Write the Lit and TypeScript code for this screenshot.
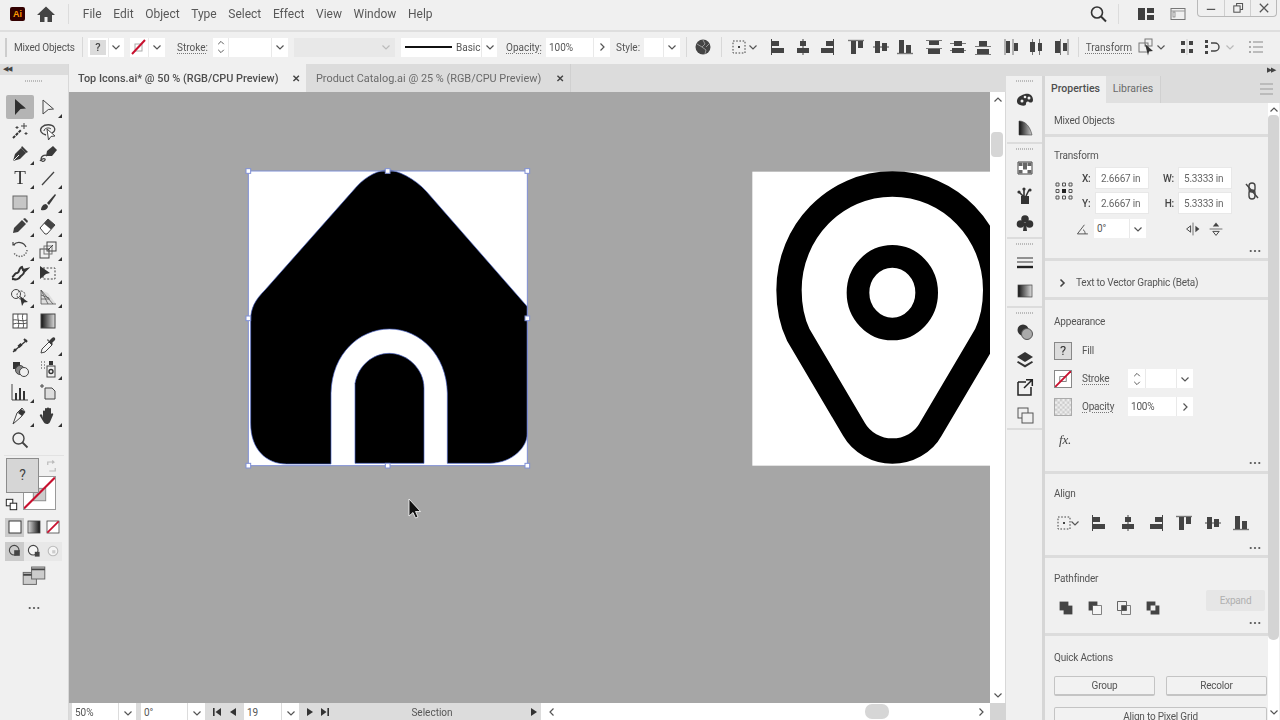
import { LitElement, html, css, svg } from "lit";
import { customElement } from "lit/decorators.js";

const ic = (c: unknown) => html`<svg class="ic" viewBox="0 0 20 20">${c}</svg>`;
const chev = html`<svg class="chev" viewBox="0 0 10 10"><path d="M1.5 3.5L5 7l3.5-3.5" /></svg>`;
const chevR = html`<svg class="chev" viewBox="0 0 10 10"><path d="M3.5 1.5L7 5 3.5 8.5" /></svg>`;
const chevUp = html`<svg class="chev" viewBox="0 0 10 10"><path d="M1.5 6.5L5 3l3.5 3.5" /></svg>`;
const dots = html`<svg class="dots" viewBox="0 0 14 4"><circle cx="2" cy="2" r="1.3" /><circle cx="7" cy="2" r="1.3" /><circle cx="12" cy="2" r="1.3" /></svg>`;

const D = "#444";
const al = {
  left: svg`<path d="M3.5 2v16" stroke="${D}"/><path d="M4 4h7v5H4zM4 11h12v5H4z" fill="${D}"/>`,
  hc: svg`<path d="M10 2v16" stroke="${D}"/><path d="M7 4h6v5H7zM4 11h12v5H4z" fill="${D}"/>`,
  right: svg`<path d="M16.5 2v16" stroke="${D}"/><path d="M9 4h7v5H9zM4 11h12v5H4z" fill="${D}"/>`,
  top: svg`<path d="M2 3.5h16" stroke="#777" stroke-width="1.4"/><path d="M5 4h5v13H5zM12 4h5v7h-5z" fill="${D}"/>`,
  vc: svg`<path d="M2 10h16" stroke="${D}"/><path d="M4 4h5v12H4zM11 6h5v8h-5z" fill="${D}"/>`,
  bottom: svg`<path d="M2 16.5h16" stroke="#777" stroke-width="1.4"/><path d="M4 3h5v13H4zM11 8h5v8h-5z" fill="${D}"/>`,
  dt: svg`<path d="M2 3.5h16M2 11.5h16" stroke="#777"/><path d="M5 4h10v4H5zM4 12h12v5H4z" fill="${D}"/>`,
  dc: svg`<path d="M2 6.5h16M2 13.5h16" stroke="#777"/><path d="M6 4h8v5H6zM4 11h12v5H4z" fill="${D}"/>`,
  db: svg`<path d="M2 9.5h16M2 17.5h16" stroke="#777"/><path d="M6 4h8v5H6zM4 12h12v5H4z" fill="${D}"/>`,
  dl: svg`<path d="M3 2v16M11 2v16" stroke="#777"/><path d="M4 4h4v12H4zM12 6h4v8h-4z" fill="${D}"/>`,
  dm: svg`<path d="M6.5 2v16M13.5 2v16" stroke="#777"/><path d="M4 5h5v10H4zM12 6h4v8h-4z" fill="${D}"/>`,
  dr: svg`<path d="M9.5 2v16M17 2v16" stroke="#777"/><path d="M4 4h5v12H4zM12 6h4v8h-4z" fill="${D}"/>`,
};
const alignTo = svg`<rect x="3" y="4" width="12" height="12" fill="none" stroke="#444" stroke-dasharray="1.6 1.6"/><rect x="8" y="9" width="2" height="2" fill="#444"/>`;

const grad = svg`<defs><linearGradient id="g1" x1="0" x2="1"><stop offset="0" stop-color="#111"/><stop offset="1" stop-color="#ddd"/></linearGradient></defs>`;

const tools: { i: unknown; f?: boolean; on?: boolean; t?: boolean }[] = [
  { on: true, i: svg`<path d="M5 2l11 9.5-5.5.6L5 18z" fill="#2f2f2f"/>` },
  { f: true, i: svg`<path d="M5 3l10.5 9-5.2.5L5 17z" fill="none" stroke="#444"/>` },
  { i: svg`<path d="M3 17l8-8" stroke="#333" stroke-width="2" stroke-dasharray="3 1"/><path d="M14 2v6M11 5h6M7 5v3M5.5 6.5h3M16 11v3M14.5 12.5h3" stroke="#444"/>` },
  { i: svg`<path d="M8 14C3 13 1 9 4 6s10-3 12 0 0 5-2 6" fill="none" stroke="#444" stroke-width="1.3"/><path d="M6 10c0-3 5-4 7-2" fill="none" stroke="#444"/><path d="M9 8l8 7-4 .4-2.5 3.6z" fill="#fff" stroke="#444"/>` },
  { f: true, i: svg`<path d="M3 17l2-7 6-6 5 5-6 6z" fill="#3a3a3a"/><path d="M12 2l6 6-2 1-5-5z" fill="#3a3a3a"/><path d="M3.5 16.5L9 11" stroke="#f0f0f0"/>` },
  { i: svg`<path d="M8 12l1-5 6-5 4 4-5 6z" fill="#3a3a3a"/><path d="M9 12c-2-2-6 0-6 3s3 3 4 1-3-2-5 1" fill="none" stroke="#444" stroke-width="1.3"/>` },
  { f: true, t: true, i: html`<span class="tee">T</span>` },
  { f: true, i: svg`<path d="M4 17L16 4" stroke="#444" stroke-width="1.3"/>` },
  { f: true, i: svg`<rect x="3" y="4" width="14" height="13" fill="#c6c6c6" stroke="#666"/>` },
  { f: true, i: svg`<path d="M17 2l1 1-7 10-2-2z" fill="#3a3a3a"/><path d="M3 18c0-3 2-6 5-6l2 2c0 3-3 5-7 4z" fill="#3a3a3a"/>` },
  { f: true, i: svg`<path d="M3 17l1-5 8-8 4 4-8 8z" fill="#3f3f3f"/><path d="M13 3l2-1 3 3-1 2z" fill="#3f3f3f"/>` },
  { f: true, i: svg`<path d="M2 12l8-9 7 6-8 9H7z" fill="#fff" stroke="#444"/><path d="M6 7.5L10 3l7 6-4 4.5z" fill="#444"/>` },
  { f: true, i: svg`<path d="M5 5h-2V2M3.5 5A7.5 7.5 0 0 1 16 7" fill="none" stroke="#444" stroke-width="1.2"/><path d="M17 10a7 7 0 0 1-13 3" fill="none" stroke="#666" stroke-width="1.5" stroke-dasharray="1.3 1.3"/>` },
  { f: true, i: svg`<rect x="2" y="9" width="9" height="9" fill="none" stroke="#444"/><rect x="6" y="6" width="8" height="8" fill="none" stroke="#777"/><rect x="9" y="2" width="9" height="9" fill="none" stroke="#444"/><path d="M10 10l5-5" stroke="#444"/>` },
  { f: true, i: svg`<path d="M2 14c3-1 2-4 5-4s1-5 5-6l1 3 4-1-3 3c0 3-3 3-4 5s-4 3-6 2" fill="none" stroke="#333" stroke-width="2"/><circle cx="3" cy="16" r="1.2" fill="#333"/>` },
  { f: true, i: svg`<rect x="5" y="5" width="12" height="11" fill="none" stroke="#444" stroke-dasharray="2 1.6"/><path d="M2 3l10 7-4 1-6 5z" fill="#333"/>` },
  { f: true, i: svg`<circle cx="6" cy="7" r="4.5" fill="none" stroke="#444"/><circle cx="11" cy="8" r="4" fill="none" stroke="#444" stroke-dasharray="2 1"/><path d="M10 9l8 6-4 .4-2 3.6z" fill="#333"/>` },
  { f: true, i: svg`<path d="M3 17V3l7 3 8 11z" fill="#ddd" stroke="none"/><path d="M3 3v14h15M3 3l7 14M3 3l12 14M3 8l8 3M3 12h9" stroke="#555" fill="none" stroke-width=".8"/>` },
  { i: svg`<rect x="3" y="3" width="14" height="14" fill="#fff" stroke="#444"/><path d="M3 9c4-1 8 2 14 0M3 13c5-2 9 1 14-1M8 3c-1 5 2 9 0 14M13 3c-2 5 2 9 0 14" fill="none" stroke="#444" stroke-width=".9"/>` },
  { i: svg`${grad}<rect x="3" y="3" width="14" height="14" fill="url(#g1)" stroke="#444"/>` },
  { i: svg`<path d="M3 17l14-12" stroke="#333" stroke-width="1.2"/><circle cx="5" cy="15" r="1.5" fill="#333"/><rect x="8" y="9" width="4" height="3" fill="#333" transform="rotate(-40 10 10.5)"/><path d="M14 4l3 3" stroke="#333" stroke-width="2"/>` },
  { f: true, i: svg`<path d="M3 18l1-4 7-7 3 3-7 7z" fill="#f5f5f5" stroke="#444"/><path d="M11 6l3-3c2-2 4 0 3 2l-3 3 1 1-1 1-5-5 1-1z" fill="#3a3a3a"/>` },
  { i: svg`<rect x="3" y="3" width="7" height="7" fill="#333"/><circle cx="10" cy="11" r="4.5" fill="#888" stroke="#444"/><circle cx="14" cy="13" r="4.5" fill="#f0f0f0" stroke="#444"/>` },
  { f: true, i: svg`<rect x="9" y="7" width="8" height="11" fill="#f0f0f0" stroke="#444"/><circle cx="13" cy="12.5" r="2" fill="none" stroke="#333" stroke-width="1.4"/><rect x="11" y="2" width="4" height="4" fill="#333"/><path d="M3 3h1M6 3h1M3 6h1M6 6h1M3 9h1M6 9h1" stroke="#777" stroke-width="1.3"/>` },
  { f: true, i: svg`<path d="M2 2v16h16" fill="none" stroke="#444"/><path d="M5 11h2v7H5zM9 6h2v12H9zM13 9h2v9h-2z" fill="#333"/>` },
  { i: svg`<path d="M7 6h7l3 3v8H7z" fill="#ddd" stroke="#444"/><path d="M2 4h4M4 2v4" stroke="#444"/>` },
  { f: true, i: svg`<path d="M3 18l4-11 5-5 3 4-4 5z" fill="#f5f5f5" stroke="#444"/><path d="M11 3l4 3-3 4-4-3z" fill="#333"/>` },
  { f: true, i: svg`<path d="M5 12V5.5c0-1.3 2-1.3 2 0V3c0-1.3 2-1.3 2 0v-.5c0-1.3 2-1.3 2 0V3c0-1.3 2-1.3 2 0v5c.8-1.5 3-.5 2 1l-3 7c-.7 1.5-2 2-3 2H9c-2 0-3-1-4-3l-3-5c-.8-1.4 1.3-2.5 2.2-1z" fill="#3a3a3a"/>` },
  { i: svg`<circle cx="8.5" cy="8.5" r="5.5" fill="none" stroke="#444" stroke-width="1.4"/><path d="M12.5 12.5l5 5" stroke="#444" stroke-width="1.8"/>` },
];

const dockGroups: unknown[][] = [
  [
    svg`<path d="M10 4c5-1 8 2 8 6 0 3-3 3-4 2-2-1-3 0-3 2s-3 2-6 1-4-4-2-7c1-2 4-3 7-4z" fill="#333"/><circle cx="7" cy="11" r="1.5" fill="#f0f0f0"/><circle cx="14" cy="8" r="1.5" fill="#f0f0f0"/><circle cx="10" cy="7" r="1.3" fill="#f0f0f0"/>`,
    svg`<defs><linearGradient id="g2" x1="0" x2="1" y1="0" y2="0"><stop offset="0" stop-color="#111"/><stop offset="1" stop-color="#ccc"/></linearGradient></defs><path d="M4 3c6 0 11 5 13 14H4z" fill="url(#g2)" stroke="#444" stroke-width=".6"/>`,
  ],
  [
    svg`<path d="M3 4h14v12H3z" fill="#fff" stroke="#444"/><path d="M3.5 4.5h4v3.5h-4zM12.5 4.5h4v3.5h-4zM8 8h4v3.5H8zM3.5 12h4v3.5h-4zM12.5 12h4v3.5h-4zM8 4.5h4V8H8z" fill="#666"/>`,
    svg`<path d="M6 10h8v8H6z" fill="#333"/><path d="M9 10V4M11 10l3-6M8 10L4 6" stroke="#333" stroke-width="1.6"/><circle cx="9" cy="3" r="1.6" fill="#333"/><circle cx="15" cy="4" r="1.6" fill="#333"/><circle cx="4" cy="6" r="1.6" fill="#333"/>`,
    svg`<circle cx="10" cy="6" r="3.8" fill="#333"/><circle cx="5.5" cy="11" r="3.8" fill="#333"/><circle cx="14.5" cy="11" r="3.8" fill="#333"/><path d="M9 10h2l1 8H8z" fill="#333"/>`,
  ],
  [
    svg`<path d="M2 5h16M2 9h16" stroke="#333"/><path d="M2 14h16" stroke="#222" stroke-width="2.4"/>`,
    svg`<defs><linearGradient id="g3" x1="0" x2="1"><stop offset="0" stop-color="#111"/><stop offset="1" stop-color="#ddd"/></linearGradient></defs><rect x="3" y="4" width="14" height="12" fill="url(#g3)" stroke="#444" stroke-width=".7"/>`,
  ],
  [
    svg`<circle cx="8" cy="8" r="5.5" fill="#333"/><circle cx="12" cy="12" r="5.5" fill="#aaa" stroke="#555"/>`,
    svg`<path d="M10 2l8 5-8 5-8-5z" fill="#333"/><path d="M3 11l7 4 7-4 1 1.4-8 5-8-5z" fill="#333"/>`,
    svg`<path d="M3 5h8M3 5v13h13v-8" fill="none" stroke="#222" stroke-width="1.5"/><path d="M9 11l8-8M11 2.7h6.3V9" fill="none" stroke="#222" stroke-width="1.5"/>`,
    svg`<rect x="3" y="3" width="10" height="10" fill="#f0f0f0" stroke="#555"/><rect x="7" y="8" width="11" height="10" fill="#f0f0f0" stroke="#555"/>`,
  ],
];

@customElement("app-root")
export class AppRoot extends LitElement {
  static styles = css`
    :host { display: block; width: 1280px; height: 720px; overflow: hidden; background: #f0f0f0; font-family: Roboto, "Noto Sans", sans-serif; font-size: 10px; color: #565656; }
    * { box-sizing: border-box; }
    .ic { width: 20px; height: 20px; display: block; flex: none; }
    .chev { width: 10px; height: 10px; display: block; flex: none; }
    .chev path { fill: none; stroke: #555; stroke-width: 1.2; }
    .dots { width: 12px; height: 4px; display: block; fill: #555; }
    .app { display: flex; flex-direction: column; height: 720px; filter: blur(.3px); }

    /* menu */
    .menu { height: 30px; display: flex; align-items: center; flex: none; padding-bottom: 2px; }
    .logo { width: 15px; height: 14px; margin-left: 10px; background: #330000; border-radius: 2px; color: #ff9a00; font: 700 9px "Liberation Sans", sans-serif; display: flex; align-items: center; justify-content: center; }
    .home { margin-left: 11px; }
    .msep { width: 1px; height: 20px; background: #dcdcdc; margin: 0 8px 0 12px; }
    .mitems { display: flex; font-size: 12px; color: #585858; }
    .mitems span { padding: 0 5.8px; white-space: nowrap; }
    .mright { margin-left: auto; display: flex; align-items: center; height: 30px; }
    .msearch { margin-right: 10px; }
    .msep2 { width: 1px; height: 20px; background: #dcdcdc; margin-right: 17px; }
    .ws { margin-right: 12px; }
    .ws2 { margin-right: 8px; }
    .winbtns { display: flex; align-self: flex-start; margin-right: 3px; margin-left: 1px; height: 18px; border: 1px solid #b9b9b9; border-top: 0; border-radius: 0 0 4px 4px; }
    .winbtns div { width: 26px; display: flex; align-items: center; justify-content: center; border-left: 1px solid #cfcfcf; }
    .winbtns div:first-child { border-left: 0; }
    .winbtns .ic { width: 14px; height: 14px; }

    /* control */
    .ctrl { height: 34px; flex: none; border-top: 2px solid #dedede; display: flex; align-items: center; padding-bottom: 2px; }
    .grip { width: 2px; height: 19px; background: #cdcdcd; margin-left: 5px; }
    .cmix { margin-left: 7px; width: 68px; white-space: nowrap; letter-spacing: -.2px; }
    .vsep { width: 1px; height: 20px; background: #d8d8d8; flex: none; }
    .fld { display: flex; height: 19px; gap: 1px; background: #e9e9e9; flex: none; align-items: stretch; }
    .fld > * { background: #fff; display: flex; align-items: center; justify-content: center; }
    .qfield { margin-left: 5px; width: 36px; }
    .qfield b { width: 20px; justify-content: center; background: #dcdcdc; font-weight: 500; border: 2px solid #fff; font-size: 11px; color: #444; }
    .qfield > span { flex: 1; padding-right: 2px; }
    .sfield { margin-left: 6px; width: 35px; }
    .sfield > i { width: 18px; }
    .sfield > span { flex: 1; }
    .dl { text-decoration: underline dotted #777; text-underline-offset: 2px; white-space: nowrap; }
    .cstroke { margin-left: 12px; width: 36px; }
    .cstroke span, .cop span, .ctrans span { display: inline-block; }
    .stepper { flex-direction: column; gap: 0; }
    .stepper .chev { height: 8px; width: 10px; }
    .cs-w { width: 75px; }
    .cs-w > .stepper { width: 15px; }
    .cs-w > u { flex: 1; }
    .cs-w > i { width: 16px; }
    .dis { margin-left: 6px; width: 101px; background: #e8e8e8; justify-content: flex-end; padding-right: 4px; display: flex; height: 19px; align-items: center; flex: none; }
    .dis .chev { opacity: .3; }
    .prof { margin-left: 6px; width: 96px; }
    .prof > div { flex: 1; justify-content: flex-start; padding-left: 4px; gap: 4px; }
    .prof > div u { display: block; width: 47px; height: 2px; background: #111; }
    .prof > i { width: 15px; }
    .cop { margin-left: 9px; width: 40px; }
    .op { width: 64px; }
    .op > span { flex: 1; justify-content: flex-start; padding-left: 3px; }
    .op > i { width: 16px; }
    .cstyle { margin-left: 6px; width: 28px; }
    .stf { width: 36px; }
    .stf > u { flex: 1; }
    .stf > i { width: 16px; }
    .cv1 { margin-left: 6px; }
    .globe { margin: 0 8px 0 6px; }
    .alto { margin-left: 8px; display: flex; align-items: center; width: 36px; }
    .alto .chev { margin-left: -2px; }
    .algrp { display: flex; }
    .algrp span { width: 24.5px; display: flex; justify-content: center; }
    .algs { display: flex; gap: 4.25px; }
    .cv2 { margin-left: 5px; }
    .ctrans { margin: 0 9px 0 7px; width: 41px; }
    .cend2 { margin-left: 11px; }
    .cend3 { margin-left: 5px; }
    .cend5 { margin-left: 3px; opacity: .35; }
    .cend6 { margin-left: 11px; }

    /* main */
    .main { flex: 1; display: flex; min-height: 0; }
    .strip { height: 11px; background: #dcdcdc; display: flex; align-items: center; padding: 0 3px; flex: none; font-size: 7px; line-height: 1; color: #444; }
    .left { width: 69px; flex: none; display: flex; flex-direction: column; border-right: 1px solid #d8d8d8; }
    .griph { height: 2px; width: 18px; margin: 5px auto 0; background: repeating-linear-gradient(90deg, #bbb 0 1px, transparent 1px 2px); flex: none; }
    .tools { display: grid; grid-template-columns: 28px 28px; grid-auto-rows: 23.8px; margin: 13px 0 0 6px; width: 56px; flex: none; }
    .tool { position: relative; display: flex; align-items: center; justify-content: center; }
    .tool.on { background: #b4b4b4; border-radius: 2px; }
    .tool.fly::after { content: ""; position: absolute; right: 0; bottom: 1px; border: 2px solid transparent; border-right-color: #333; border-bottom-color: #333; }
    .tee { font: 400 19px "Liberation Serif", serif; color: #333; line-height: 20px; }
    .hsep { height: 1px; background: #e2e2e2; margin: 3px 4px 0; flex: none; }
    .fs { position: relative; height: 58px; margin: 2px 0 0 0; flex: none; }
    .fs .fill { position: absolute; left: 6px; top: 0; width: 33px; height: 35px; background: #d6d6d6; border: 1px solid #8c8c8c; z-index: 2; display: flex; align-items: center; justify-content: center; font-size: 14px; color: #444; }
    .fs .stroke { position: absolute; left: 23px; top: 18px; width: 33px; height: 34px; background: #fff; border: 1px solid #999; }
    .fs .stroke .ic { width: 31px; height: 32px; }
    .fs .swap { position: absolute; left: 44px; top: 1px; }
    .fs .swap .ic { width: 15px; height: 15px; }
    .fs .def { position: absolute; left: 5px; top: 40px; }
    .fs .def .ic { width: 13px; height: 13px; }
    .row3 { display: flex; margin: 2px 0 0 5px; width: 57px; height: 19px; flex: none; }
    .row3 div { flex: 1; display: flex; align-items: center; justify-content: center; }
    .row3 .ic { width: 16px; height: 16px; }
    .row3 .on { background: #cbcbcb; }
    .row3b { margin-top: 5px; background: #e8e8e8; }
    .scr { display: flex; justify-content: center; margin-top: 3px; flex: none; }
    .scr .ic { width: 24px; height: 24px; }
    .ldots { display: flex; justify-content: center; margin-top: 18px; flex: none; }

    .center { width: 937px; flex: none; display: flex; flex-direction: column; }
    .tabs { height: 28px; flex: none; background: #dcdcdc; display: flex; font-size: 10.9px; font-weight: 500; color: #4e4e4e; }
    .tab { display: flex; align-items: center; white-space: nowrap; }
    .tab.a { width: 237px; background: #f0f0f0; padding: 0 6px 0 9px; justify-content: space-between; }
    .tab.b { width: 265px; padding: 0 6px 0 10px; justify-content: space-between; font-weight: 400; color: #6a6a6a; border-right: 1px solid #d0d0d0; }
    .x { font-size: 10px; font-weight: 700; color: #444; }
    .work { flex: 1; display: flex; min-height: 0; }
    .canvas { width: 921px; position: relative; overflow: hidden; background: #a6a6a6; }
    .art { position: absolute; left: 161px; top: 68px; width: 310px; height: 320px; }
    .art2 { position: absolute; left: 671px; top: 68px; width: 270px; height: 320px; }
    .cursor { position: absolute; left: 339px; top: 406px; width: 16px; height: 22px; }
    .vs { width: 16px; flex: none; background: #fff; position: relative; border-right: 1px solid #d8d8d8; display: flex; flex-direction: column; align-items: center; justify-content: space-between; padding: 3px 0; }
    .thumb { position: absolute; left: 1px; top: 40px; width: 12px; height: 25px; background: #d6d6d6; border-radius: 4px; }
    .status { height: 17px; flex: none; background: #dcdcdc; display: flex; align-items: stretch; }
    .st { display: flex; gap: 1px; flex: none; margin-left: 3px; }
    .st > * { background: #fff; display: flex; align-items: center; padding-top: 2px; }
    .st > span { padding-left: 3px; }
    .st > i { justify-content: center; }
    .w46 > span { width: 46px; }
    .w46 > i { width: 17px; }
    .w37 > span { width: 37px; }
    .w37 > i { width: 17px; }
    .s2nd { margin-left: 5px; }
    .sn { display: flex; align-items: center; margin: 0 3px 0 7px; gap: 6px; padding-top: 1px; }
    .sn2 { margin: 0; margin-left: 6px; gap: 5px; }
    .tri { display: block; width: 10px; height: 10px; flex: none; fill: #333; align-self: center; }
    .sel { width: 199px; padding: 2px 0 0 5px; display: flex; align-items: center; justify-content: center; }
    .hs { flex: 1; background: #fff; margin-left: 2px; position: relative; display: flex; align-items: center; justify-content: space-between; padding: 1px 4px 0 6px; }
    .hthumb { position: absolute; left: 324px; top: 1px; width: 24px; height: 15px; background: #d6d6d6; border-radius: 7px; }
    .corner { width: 16px; background: #d4d4d4; flex: none; }

    .dock { width: 39px; flex: none; border-right: 3px solid #d6d6d6; display: flex; flex-direction: column; background: #f0f0f0; padding-left: 1px; }
    .dhead { height: 12px; background: #dcdcdc; margin-left: -1px; flex: none; margin-right: -3px; }
    .dgrp { display: flex; flex-direction: column; align-items: center; flex: none; border-bottom: 2px solid #dcdcdc; padding-top: 14px; gap: 7.5px; position: relative; }
    .dgrp::before { content: ""; position: absolute; left: 9px; top: 4px; width: 18px; height: 2px; background: repeating-linear-gradient(90deg, #bbb 0 1px, transparent 1px 2px); }
    .dg0 { height: 68px; } .dg1 { height: 95px; } .dg2 { height: 69px; } .dg3 { height: 122px; }

    .panel { flex: 1; display: flex; flex-direction: column; min-width: 0; }
    .phead { height: 12px; background: #dcdcdc; display: flex; justify-content: flex-end; align-items: center; padding-right: 5px; flex: none; font-size: 7px; color: #444; }
    .ptabs { height: 27px; background: #dcdcdc; display: flex; flex: none; align-items: stretch; font-size: 10.5px; position: relative; }
    .ptabs > div { display: flex; align-items: center; justify-content: center; padding-bottom: 3px; }
    .pa { width: 61px; background: #f0f0f0; font-weight: 500; color: #4e4e4e; }
    .pb { width: 55px; background: #e0e0e0; font-weight: 400; color: #6a6a6a; border-right: 1px solid #d0d0d0; }
    .pmenu { position: absolute; right: 3px; top: 3px; }
    .pbody { flex: 1; display: flex; min-height: 0; }
    .secs { width: 223px; flex: none; overflow: hidden; letter-spacing: -.2px; }
    .sb { width: 11px; background: #fff; position: relative; flex: none; display: flex; flex-direction: column; align-items: center; justify-content: space-between; padding: 2px 0 3px; }
    .sbt { position: absolute; left: 0; top: 12px; width: 11px; height: 525px; background: #d4d4d4; border-radius: 4px 4px 5px 5px; }
    .sec { padding: 11px 9px 0; border-bottom: 3px solid #dcdcdc; overflow: hidden; position: relative; }
    .sec h4 { margin: 0; font-size: 10px; font-weight: 400; color: #555; line-height: 14px; white-space: nowrap; }
    .s1 { height: 34px; padding-top: 11px; } .s2 { height: 124px; padding-top: 12px; } .s3 { height: 39px; padding-top: 15px; } .s4 { height: 174px; padding-top: 15px; } .s5 { height: 84px; padding-top: 13px; } .s6 { height: 78px; padding-top: 14px; } .s7 { height: 100px; border-bottom: 0; padding-top: 15px; }
    .secdots { position: absolute; right: 7px; bottom: 4px; }
    .s2 .secdots { bottom: 5px; } .s4 .secdots { bottom: 6px; } .s5 .secdots { bottom: 5px; } .s6 .secdots { bottom: 8px; }
    .tgrid { display: grid; grid-template-columns: 28px 14px 52px 31px 52px 36px; grid-template-rows: 20px 20px; row-gap: 5px; margin-top: 5px; align-items: center; }
    .tgrid .refpt { grid-row: 1 / 3; }
    .tgrid .lnk { grid-row: 1 / 3; grid-column: 6; justify-self: end; margin-right: 5px; }
    .lb { font-weight: 500; font-size: 10px; color: #444; }
    .lbr { text-align: right; padding-right: 5px; }
    .inp { background: #fff; height: 20px; display: flex; align-items: center; padding-left: 5px; box-shadow: 0 0 0 1px #e8e8e8; white-space: nowrap; color: #666; }
    .trow { display: flex; align-items: center; margin-top: 6px; height: 19px; }
    .ang { margin-left: 22px; }
    .ang .ic { width: 14px; height: 14px; margin-right: 4px; }
    .afld { width: 52px; }
    .afld > span { flex: 1; justify-content: flex-start; padding-left: 3px; }
    .afld > i { width: 16px; }
    .flips { display: flex; margin-left: 39px; gap: 7px; }
    .flips .ic { width: 16px; height: 16px; }
    .ttv { display: flex; align-items: center; gap: 9px; padding: 1px 0 0 3px; white-space: nowrap; }
    .ttv .chev path { stroke-width: 1.6; stroke: #444; }
    .apr { display: flex; align-items: center; height: 19px; margin-top: 9px; }
    .apr1 { margin-top: 12px; }
    .sw { width: 18px; height: 18px; margin-right: 10px; flex: none; }
    .swq { background: #dcdcdc; border: 1px solid #888; font-size: 13px; display: flex; align-items: center; justify-content: center; color: #333; }
    .swn { border: 1px solid #888; background: #fff; }
    .swn .ic, .swo .ic { width: 16px; height: 16px; }
    .swo { border: 1px solid #aaa; }
    .apl { width: 46px; white-space: nowrap; }
    .apf { width: 65px; }
    .apf > .stepper { width: 17px; }
    .apf > u { flex: 1; }
    .apf > i { width: 16px; }
    .apo { width: 65px; }
    .apo > span { flex: 1; justify-content: flex-start; padding-left: 3px; }
    .apo > i { width: 16px; }
    .fx { font: italic 13px "Liberation Serif", serif; margin: 16px 0 0 5px; color: #444; }
    .alrow { display: flex; align-items: center; margin-top: 12px; }
    .alrow .a0 { display: flex; align-items: center; margin-left: 1px; width: 30px; }
    .alrow .a0 .chev { margin-left: -5px; }
    .alrow .ai { width: 28.4px; display: flex; justify-content: center; flex: none; }
    .pfrow { display: flex; margin-top: 14px; align-items: center; position: relative; }
    .pfrow span { width: 29px; display: flex; justify-content: center; }
    .pfrow span .ic { width: 16px; height: 16px; }
    .pfbtns { display: flex; margin-left: -3px; }
    .exp { position: absolute; left: 152px; top: -10px; width: 59px; height: 21px; background: #e6e6e6; color: #b0b0b0; display: flex; align-items: center; justify-content: center; border-radius: 2px; }
    .qa { display: grid; grid-template-columns: 101px 101px; column-gap: 11px; row-gap: 11px; margin-top: 11px; }
    .qa div { height: 20px; border: 1px solid #c4c4c4; border-bottom-width: 2px; border-radius: 2px; display: flex; align-items: center; justify-content: center; white-space: nowrap; color: #555; background: #f2f2f2; }
    .qa .wide { grid-column: 1 / 3; }
    .art svg, .art2 svg { display: block; width: 100%; height: 100%; }
    .tchev { font-size: 7px; letter-spacing: -1px; }
  `;

  render() {
    const stepper = html`<span class="stepper">${chevUp}${chev}</span>`;
    return html`
      <div class="app">
        <div class="menu">
          <div class="logo">Ai</div>
          <div class="home">${ic(svg`<path d="M10 2.5L1 11h3v7h4.5v-5h3v5H16v-7h3z" fill="#444"/>`)}</div>
          <div class="msep"></div>
          <div class="mitems">
            ${["File", "Edit", "Object", "Type", "Select", "Effect", "View", "Window", "Help"].map((m) => html`<span>${m}</span>`)}
          </div>
          <div class="mright">
            <div class="msearch">${ic(svg`<circle cx="9" cy="8.5" r="5.5" fill="none" stroke="#333" stroke-width="1.6"/><path d="M13 12.5l5 5" stroke="#333" stroke-width="2"/>`)}</div>
            <div class="msep2"></div>
            <div class="ws">${ic(svg`<path d="M2 4h7v12H2zM11 4h7v5h-7zM11 11h7v5h-7z" fill="#3f3f3f"/>`)}</div>
            <div class="ws2">${ic(svg`<rect x="3" y="4.5" width="14" height="11" fill="none" stroke="#777"/><path d="M3 7h14" stroke="#999"/><rect x="5" y="8" width="2" height="5" fill="none" stroke="#777" stroke-width=".7"/>`)}</div>
            <div class="winbtns">
              <div>${ic(svg`<path d="M4 12h12" stroke="#555" stroke-width="1.8"/>`)}</div>
              <div>${ic(svg`<rect x="4" y="7" width="9" height="9" fill="none" stroke="#555" stroke-width="1.5"/><path d="M8 7V3.5h8.5V12H13" fill="none" stroke="#555" stroke-width="1.5"/>`)}</div>
              <div>${ic(svg`<path d="M4 4l12 12M16 4L4 16" stroke="#555" stroke-width="1.8"/>`)}</div>
            </div>
          </div>
        </div>

        <div class="ctrl">
          <div class="grip"></div>
          <div class="cmix">Mixed Objects</div>
          <div class="vsep"></div>
          <div class="fld qfield"><b>?</b><span>${chev}</span></div>
          <div class="fld sfield"><i>${ic(svg`<rect x="6" y="7" width="7" height="7" fill="none" stroke="#aaa"/><path d="M3 17L16 3" stroke="#c8102e" stroke-width="2"/>`)}</i><span>${chev}</span></div>
          <div class="cstroke"><span class="dl">Stroke:</span></div>
          <div class="fld cs-w">${stepper}<u></u><i>${chev}</i></div>
          <div class="dis">${chev}</div>
          <div class="fld prof"><div><u></u><span>Basic</span></div><i>${chev}</i></div>
          <div class="cop"><span class="dl">Opacity:</span></div>
          <div class="fld op"><span>100%</span><i>${chevR}</i></div>
          <div class="cstyle">Style:</div>
          <div class="fld stf"><u></u><i>${chev}</i></div>
          <div class="vsep cv1"></div>
          <div class="globe">${ic(svg`<circle cx="10" cy="10" r="7.5" fill="#444"/><path d="M10 3l2 4-3 3 4 3-1 4M4 7l5 3M16 7l-3 3" stroke="#aaa" stroke-width=".8" fill="none"/>`)}</div>
          <div class="vsep"></div>
          <div class="alto">${ic(alignTo)}${chev}</div>
          <div class="algs">
            <div class="algrp"><span>${ic(al.left)}</span><span>${ic(al.hc)}</span><span>${ic(al.right)}</span></div>
            <div class="algrp"><span>${ic(al.top)}</span><span>${ic(al.vc)}</span><span>${ic(al.bottom)}</span></div>
            <div class="algrp"><span>${ic(al.dt)}</span><span>${ic(al.dc)}</span><span>${ic(al.db)}</span></div>
            <div class="algrp"><span>${ic(al.dl)}</span><span>${ic(al.dm)}</span><span>${ic(al.dr)}</span></div>
          </div>
          <div class="vsep cv2"></div>
          <div class="ctrans"><span class="dl">Transform</span></div>
          ${ic(svg`<rect x="3" y="6" width="9" height="9" fill="none" stroke="#777"/><rect x="9" y="2" width="7" height="7" fill="none" stroke="#777"/><path d="M9 7l8 7-4 .4-1 4z" fill="#333"/>`)}
          ${chev}
          <div class="cend2">${ic(svg`<path d="M4 4h4v4H4zM12 4h4v4h-4zM4 12h4v4H4zM12 12h4v4h-4z" fill="#444"/><path d="M10 2v16" stroke="#ccc"/>`)}</div>
          <div class="cend3">${ic(svg`<path d="M3 3h3v3H3zM3 8h3v3H3zM3 14h3v3H3z" fill="#444"/><path d="M9 6h4a4 4 0 0 1 0 8H9" fill="none" stroke="#444" stroke-width="1.4"/>`)}</div>
          <div class="cend5">${chev}</div>
          <div class="cend6">${ic(svg`<path d="M7 5h10M7 10h10M7 15h10" stroke="#888"/><path d="M3 5h2M3 10h2M3 15h2" stroke="#666"/>`)}</div>
        </div>

        <div class="main">
          <div class="left">
            <div class="strip"><span class="tchev">◀◀</span></div>
            <div class="griph"></div>
            <div class="tools">
              ${tools.map((t) => html`<div class="tool ${t.on ? "on" : ""} ${t.f ? "fly" : ""}">${t.t ? t.i : ic(t.i)}</div>`)}
            </div>
            <div class="hsep"></div>
            <div class="fs">
              <div class="fill">?</div>
              <div class="stroke">${ic(svg`<rect x="6" y="7" width="8" height="8" fill="#ccc" stroke="#888" stroke-width=".6"/><path d="M0 20L20 0" stroke="#c8102e" stroke-width="1.4"/>`)}</div>
              <div class="swap">${ic(svg`<path d="M5 8V4h8l-2-2M13 4l-2 2M15 12v4H7" fill="none" stroke="#bbb" stroke-width="1.6"/>`)}</div>
              <div class="def">${ic(svg`<rect x="2" y="2" width="10" height="10" fill="#fff" stroke="#222" stroke-width="1.5"/><rect x="8" y="8" width="10" height="10" fill="#fff" stroke="#222" stroke-width="1.5"/>`)}</div>
            </div>
            <div class="row3">
              <div class="on">${ic(svg`<rect x="2.5" y="2.5" width="15" height="15" fill="#fff" stroke="#333" stroke-width="1.2"/>`)}</div>
              <div>${ic(svg`<defs><linearGradient id="g4" x1="0" x2="1"><stop offset="0" stop-color="#ddd"/><stop offset="1" stop-color="#111"/></linearGradient></defs><rect x="2.5" y="2.5" width="15" height="15" fill="url(#g4)" stroke="#444"/>`)}</div>
              <div>${ic(svg`<rect x="2.5" y="2.5" width="15" height="15" fill="#fff" stroke="#444"/><path d="M3 17L17 3" stroke="#c8102e" stroke-width="2.2"/>`)}</div>
            </div>
            <div class="row3 row3b">
              <div class="on">${ic(svg`<circle cx="9" cy="9" r="6" fill="none" stroke="#444" stroke-width="1.4"/><rect x="9" y="9" width="7" height="7" fill="#444"/>`)}</div>
              <div>${ic(svg`<circle cx="9" cy="9" r="6" fill="#f5f5f5" stroke="#444" stroke-width="1.4"/><rect x="11" y="11" width="6" height="6" fill="#444"/>`)}</div>
              <div>${ic(svg`<circle cx="10" cy="10" r="6" fill="#f5f5f5" stroke="#bbb" stroke-width="1.4"/><rect x="9" y="9" width="4" height="4" fill="#ccc"/>`)}</div>
            </div>
            <div class="scr">${ic(svg`<rect x="1" y="7" width="11" height="10" fill="#ccc" stroke="#666" stroke-width=".8"/><rect x="8" y="2.5" width="11" height="10" fill="#ccc" stroke="#666" stroke-width=".8"/><path d="M8 4.5h11M1 9h7" stroke="#444" stroke-width="1.6"/>`)}</div>
            <div class="ldots">${dots}</div>
          </div>

          <div class="center">
            <div class="tabs">
              <div class="tab a"><span>Top Icons.ai* @ 50 % (RGB/CPU Preview)</span><span class="x">✕</span></div>
              <div class="tab b"><span>Product Catalog.ai @ 25 % (RGB/CPU Preview)</span><span class="x">✕</span></div>
            </div>
            <div class="work">
              <div class="canvas">
                <div class="art">
                  <svg viewBox="0 0 930 960">
                    <rect x="55" y="33" width="837" height="884" fill="#fff"/>
                    <path d="M473 30C450 30 410 45 378 82L105 390C75 420 62 445 62 480V790C62 870 110 912 170 912H303V700C305 580 390 507 478 507C570 507 650 585 652 700V910H780C850 908 892 860 892 820V440L590 95C555 55 500 30 473 30Z" fill="#000" stroke="#4a63c8" stroke-width="2"/>
                    <path d="M375 910V670C385 615 430 580 478 580C530 580 582 625 582 685V910Z" fill="#000" stroke="#4a63c8" stroke-width="2"/>
                    <rect x="55" y="33" width="837" height="884" fill="none" stroke="#7f8fd6" stroke-width="3"/>
                    ${[[55, 33], [473, 33], [892, 33], [55, 475], [892, 475], [55, 917], [473, 917], [892, 917]].map(([x, y]) => svg`<rect x="${x - 7}" y="${y - 7}" width="14" height="14" fill="#fff" stroke="#7f8fd6" stroke-width="3"/>`)}
                  </svg>
                </div>
                <div class="art2">
                  <svg viewBox="0 0 810 960">
                    <rect x="37" y="35" width="773" height="882" fill="#fff"/>
                    <path d="M457 72C285 72 147 215 147 390C147 440 158 490 175 525L342 808C365 848 410 873 457 873C505 873 550 848 572 808L739 525C756 490 767 440 767 390C767 215 630 72 457 72Z" fill="none" stroke="#000" stroke-width="76"/>
                    <ellipse cx="457" cy="398" rx="103" ry="109" fill="none" stroke="#000" stroke-width="68"/>
                  </svg>
                </div>
                <svg class="cursor" viewBox="0 0 16 22"><path d="M1 1V18L5 14.5 7.5 20 10 19 7.5 13.5 12.5 13.5Z" fill="#111" stroke="#fff" stroke-width=".8"/></svg>
              </div>
              <div class="vs">${chevUp}<div class="thumb"></div>${chev}</div>
            </div>
            <div class="status">
              <div class="st w46"><span>50%</span><i>${chev}</i></div>
              <div class="st w46 s2nd"><span>0°</span><i>${chev}</i></div>
              <div class="sn">
                <svg class="tri" viewBox="0 0 10 10"><path d="M1 1h1.6v8H1zM9 1v8L3.5 5z"/></svg>
                <svg class="tri" viewBox="0 0 10 10"><path d="M8 1v8L2 5z"/></svg>
              </div>
              <div class="st w37"><span>19</span><i>${chev}</i></div>
              <div class="sn sn2">
                <svg class="tri" viewBox="0 0 10 10"><path d="M2 1v8l6-4z"/></svg>
                <svg class="tri" viewBox="0 0 10 10"><path d="M1 1v8l5.5-4zM7.4 1H9v8H7.4z"/></svg>
              </div>
              <div class="sel">Selection</div>
              <svg class="tri" viewBox="0 0 10 10"><path d="M2 1v8l6-4z"/></svg>
              <div class="hs"><svg class="chev" viewBox="0 0 10 10"><path d="M6.5 1.5L3 5l3.500 3.500"/></svg><div class="hthumb"></div>${chevR}</div>
              <div class="corner"></div>
            </div>
          </div>

          <div class="dock">
            <div class="dhead"></div>
            ${dockGroups.map((g, n) => html`<div class="dgrp dg${n}">${g.map((i) => ic(i))}</div>`)}
          </div>

          <div class="panel">
            <div class="phead"><span class="tchev">▶▶</span></div>
            <div class="ptabs">
              <div class="pa">Properties</div>
              <div class="pb">Libraries</div>
              <div class="pmenu">${ic(svg`<path d="M3 5h13M3 10h13M3 15h13" stroke="#999" stroke-width="1.2"/>`)}</div>
            </div>
            <div class="pbody">
              <div class="secs">
                <div class="sec s1"><h4>Mixed Objects</h4></div>
                <div class="sec s2">
                  <h4>Transform</h4>
                  <div class="tgrid">
                    <div class="refpt">${ic(svg`<path d="M2 2h3v3H2zM8.5 2h3v3h-3zM15 2h3v3h-3zM2 8.5h3v3H2zM15 8.5h3v3h-3zM2 15h3v3H2zM8.5 15h3v3h-3zM15 15h3v3h-3z" fill="none" stroke="#555"/><rect x="8" y="8" width="4" height="4" fill="#222"/>`)}</div>
                    <div class="lb">X:</div><div class="inp">2.6667 in</div><div class="lb lbr">W:</div><div class="inp">5.3333 in</div>
                    <div class="lnk">${ic(svg`<rect x="7" y="2" width="6" height="9" rx="3" fill="none" stroke="#444" stroke-width="1.4"/><rect x="7" y="9" width="6" height="9" rx="3" fill="none" stroke="#444" stroke-width="1.4"/><path d="M4 3l12 14" stroke="#444" stroke-width="1.4"/>`)}</div>
                    <div class="lb">Y:</div><div class="inp">2.6667 in</div><div class="lb lbr">H:</div><div class="inp">5.3333 in</div>
                  </div>
                  <div class="trow">
                    <div class="ang">${ic(svg`<path d="M2 17h15M2 17L12 4M10 11c2 1 3 3 3 6" fill="none" stroke="#555" stroke-width="1.4"/>`)}</div>
                    <div class="fld afld"><span>0°</span><i>${chev}</i></div>
                    <div class="flips">
                      ${ic(svg`<path d="M10 2v16" stroke="#555"/><path d="M7 6v8L2 10z" fill="none" stroke="#444" stroke-width="1.2"/><path d="M13 6v8l5-4z" fill="#444"/>`)}
                      ${ic(svg`<path d="M2 10h16" stroke="#555"/><path d="M6 7h8l-4-5z" fill="#444"/><path d="M6 13h8l-4 5z" fill="none" stroke="#444" stroke-width="1.2"/>`)}
                    </div>
                  </div>
                  <div class="secdots">${dots}</div>
                </div>
                <div class="sec s3"><div class="ttv">${chevR}<span>Text to Vector Graphic (Beta)</span></div></div>
                <div class="sec s4">
                  <h4>Appearance</h4>
                  <div class="apr apr1"><div class="sw swq">?</div><div class="apl">Fill</div></div>
                  <div class="apr">
                    <div class="sw swn">${ic(svg`<rect x="6" y="7" width="8" height="6" fill="none" stroke="#666"/><path d="M0 20L20 0" stroke="#c8102e" stroke-width="2.4"/>`)}</div>
                    <div class="apl"><span class="dl">Stroke</span></div>
                    <div class="fld apf">${stepper}<u></u><i>${chev}</i></div>
                  </div>
                  <div class="apr">
                    <div class="sw swo">${ic(svg`<defs><pattern id="chk" width="6" height="6" patternUnits="userSpaceOnUse"><rect width="6" height="6" fill="#eee"/><rect width="3" height="3" fill="#ccc"/><rect x="3" y="3" width="3" height="3" fill="#ccc"/></pattern></defs><rect width="20" height="20" fill="url(#chk)"/>`)}</div>
                    <div class="apl"><span class="dl">Opacity</span></div>
                    <div class="fld apo"><span>100%</span><i>${chevR}</i></div>
                  </div>
                  <div class="fx">fx.</div>
                  <div class="secdots">${dots}</div>
                </div>
                <div class="sec s5">
                  <h4>Align</h4>
                  <div class="alrow">
                    <div class="a0">${ic(alignTo)}${chev}</div>
                    ${[al.left, al.hc, al.right, al.top, al.vc, al.bottom].map((a) => html`<span class="ai">${ic(a)}</span>`)}
                  </div>
                  <div class="secdots">${dots}</div>
                </div>
                <div class="sec s6">
                  <h4>Pathfinder</h4>
                  <div class="pfrow">
                    <div class="pfbtns">
                      <span>${ic(svg`<rect x="2" y="2" width="11" height="11" fill="#444"/><rect x="7" y="7" width="11" height="11" fill="#444"/>`)}</span>
                      <span>${ic(svg`<rect x="7" y="7" width="11" height="11" fill="#f5f5f5" stroke="#666"/><path d="M2 2h11v5H7v6H2z" fill="#444"/>`)}</span>
                      <span>${ic(svg`<rect x="2" y="2" width="11" height="11" fill="none" stroke="#444"/><rect x="7" y="7" width="11" height="11" fill="none" stroke="#666"/><rect x="7" y="7" width="6" height="6" fill="#444"/>`)}</span>
                      <span>${ic(svg`<path d="M2 2h11v5H7v6H2zM18 7v11H7v-5h6V7z" fill="#444"/>`)}</span>
                    </div>
                    <div class="exp">Expand</div>
                  </div>
                  <div class="secdots">${dots}</div>
                </div>
                <div class="sec s7">
                  <h4>Quick Actions</h4>
                  <div class="qa"><div>Group</div><div>Recolor</div><div class="wide">Align to Pixel Grid</div></div>
                </div>
              </div>
              <div class="sb">${chevUp}<div class="sbt"></div>${chev}</div>
            </div>
          </div>
        </div>
      </div>
    `;
  }
}
